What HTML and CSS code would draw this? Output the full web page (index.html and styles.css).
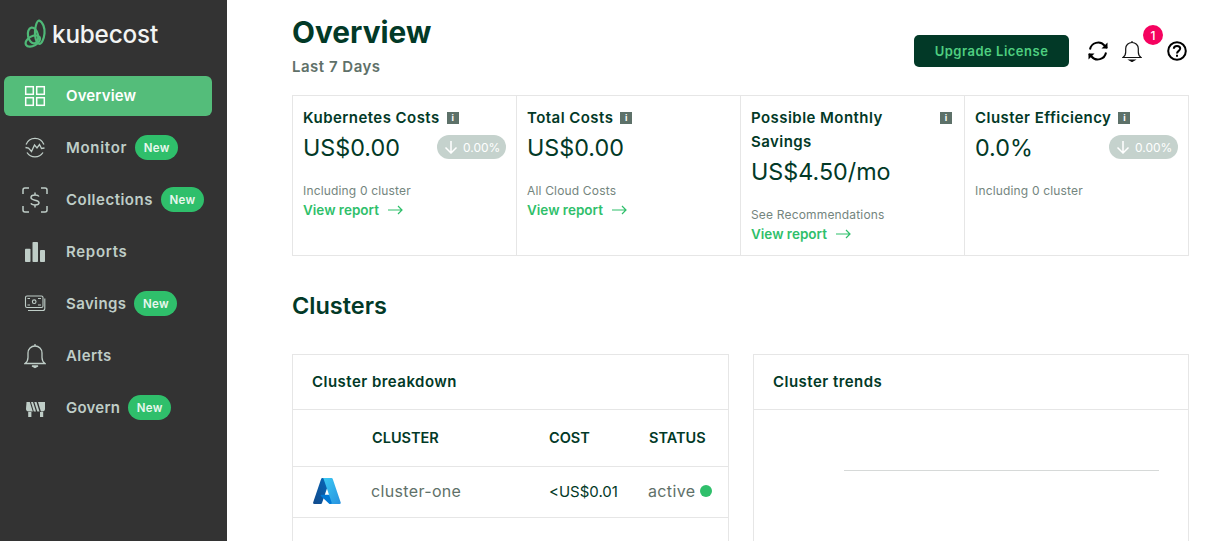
FILE: index.html
```html
<!DOCTYPE html>
<html lang="en">
<head>
<meta charset="utf-8">
<title>Kubecost Overview</title>
<link rel="stylesheet" href="styles.css">
</head>
<body>
<div class="app">
  <aside class="sidebar">
    <div class="logo">
      <svg class="logo-mark" width="24" height="30" viewBox="0 0 24 30" fill="none" stroke="#4fb877" stroke-width="2.200">
        <path d="M15 1.500C19 3 21 9 20.500 14.500 20 20 17.500 25 15.500 25 12 24 10.500 17 11 12 11.500 7 13 2 15 1.500z"/>
        <ellipse cx="9" cy="16.500" rx="5" ry="8" transform="rotate(-12 9 16.500)"/>
        <ellipse cx="8.800" cy="22" rx="7.800" ry="4.800" transform="rotate(-30 8.800 22)"/>
      </svg>
      <span class="logo-text">kubecost</span>
    </div>
    <nav class="nav">
      <a class="nav-item active">
        <span class="nav-icon"><svg width="22" height="22" viewBox="0 0 22 22" fill="none" stroke="currentColor" stroke-width="1.500"><rect x="1.700" y="1.700" width="7.600" height="7.600"/><rect x="12.700" y="1.700" width="7.600" height="7.600"/><rect x="1.700" y="12.700" width="7.600" height="7.600"/><rect x="12.700" y="12.700" width="7.600" height="7.600"/></svg></span>
        <span class="nav-label narrow">Overview</span>
      </a>
      <a class="nav-item">
        <span class="nav-icon"><svg width="22" height="22" viewBox="0 0 22 22" fill="none" stroke="currentColor" stroke-width="1.300"><path d="M2.100 7.500A9.500 9.500 0 0 1 19.900 7.500"/><path d="M3 15.500A9.500 9.500 0 0 0 19 15.500"/><path d="M1.500 10.500 4.500 11 7.500 14.500 10.500 8 13 11 15.500 7.500 17.500 11.500 20.500 11"/></svg></span>
        <span class="nav-label wider">Monitor</span><span class="badge">New</span>
      </a>
      <a class="nav-item">
        <span class="nav-icon nudge"><svg width="26" height="26" viewBox="0 0 26 26" fill="none" stroke="currentColor" stroke-width="1.500"><path d="M1 7V3a2 2 0 0 1 2-2h4M19 1h4a2 2 0 0 1 2 2v4M25 19v4a2 2 0 0 1-2 2h-4M7 25H3a2 2 0 0 1-2-2v-4"/><path d="M17 9.500C16.500 8.500 15 8 13 8 10.500 8 9 9 9 10.500 9 12.200 10.500 12.700 13 13.200S17 14.200 17 15.800 15.500 18 13 18C11 18 9.500 17.500 9 16.300M13 5.500V8M13 18v2.500"/></svg></span>
        <span class="nav-label wide-s">Collections</span><span class="badge">New</span>
      </a>
      <a class="nav-item">
        <span class="nav-icon"><svg width="22" height="22" viewBox="0 0 22 22" fill="currentColor"><rect x="1" y="7.700" width="5.500" height="13.300" rx=".8"/><rect x="8.500" y="1" width="5.500" height="20" rx=".8"/><rect x="16" y="9" width="5" height="12" rx=".8"/></svg></span>
        <span class="nav-label wider">Reports</span>
      </a>
      <a class="nav-item">
        <span class="nav-icon"><svg width="22" height="22" viewBox="0 0 22 22" fill="none" stroke="currentColor" stroke-width="1.100"><rect x="1.500" y="3" width="17.500" height="11.500" rx="1.500"/><path d="M3.500 5.500h2.500M14 5.500h3M3.500 12h2.500M14 12h3"/><circle cx="10.200" cy="8.700" r="1.800"/><path d="M20.800 5.500v10a2 2 0 0 1-2 2H4"/></svg></span>
        <span class="nav-label">Savings</span><span class="badge">New</span>
      </a>
      <a class="nav-item">
        <span class="nav-icon"><svg width="22" height="26" viewBox="0 0 22 26" fill="none" stroke="currentColor" stroke-width="1.300"><path d="M1 20.500h20c-2-1.500-3-3-3-6V10c0-4-3-7-7-7s-7 3-7 7v4.500c0 3-1 4.500-3 6z"/><path d="M11 3V1"/><path d="M8 23h6l-3 1.500z" fill="currentColor"/></svg></span>
        <span class="nav-label">Alerts</span>
      </a>
      <a class="nav-item">
        <span class="nav-icon"><svg width="22" height="22" viewBox="0 0 22 22" fill="currentColor"><path d="M2.500 5h3.300l3 9.500H4.500C3 14.500 2 13.500 2 12z"/><path d="M7 5h2l3 9.500H9.800z"/><path d="M10.300 5h2.200l3 9.500h-2.200z"/><path d="M14 5h7v7c0 1.500-1 2.500-2.500 2.500h-1.600z"/><rect x="4.200" y="15" width="3.200" height="5"/><rect x="16" y="15" width="3.200" height="5"/></svg></span>
        <span class="nav-label tight">Govern</span><span class="badge">New</span>
      </a>
    </nav>
  </aside>

  <main class="main">
    <header class="page-head">
      <div>
        <h1 class="page-title">Overview</h1>
        <div class="page-sub">Last 7 Days</div>
      </div>
      <div class="head-actions">
        <button class="upgrade">Upgrade License</button>
        <svg class="act-refresh" width="22" height="22" viewBox="0 0 22 22" fill="none" stroke="#000" stroke-width="2"><path d="M3 9.500A8.300 8.300 0 0 1 17.500 5.500L20 8"/><path d="M20.500 2.500V8.500H14.500" stroke-width="0" fill="#000"/><path d="M19 12.500A8.300 8.300 0 0 1 4.500 16.500L2 14"/><path d="M1.500 19.500V13.500H7.500" stroke-width="0" fill="#000"/></svg>
        <div class="bell-wrap">
          <svg width="20" height="22" viewBox="0 0 20 22" fill="none" stroke="#111" stroke-width="1.200"><path d="M1 17.500h18c-1.800-1.300-2.700-2.700-2.700-5.500V8.500C16.300 5 13.500 2.500 10 2.500S3.700 5 3.700 8.500V12c0 2.800-.9 4.200-2.700 5.500z"/><path d="M10 2.500V1"/><path d="M7.500 20h5l-2.500 1.500z" fill="#111"/></svg>
          <span class="bell-count">1</span>
        </div>
        <svg width="20" height="20" viewBox="0 0 20 20" fill="none" stroke="#000" stroke-width="2"><circle cx="10" cy="10" r="8.800"/><path d="M6.800 7.800C6.800 6 8.200 5 10 5s3.200 1 3.200 2.600c0 2.300-3.200 2.300-3.200 4.900"/><path d="M10 13.700v2" /></svg>
      </div>
    </header>

    <section class="stats">
      <div class="stat">
        <div class="stat-title"><span>Kubernetes Costs</span><i class="info">i</i></div>
        <div class="stat-row"><span class="stat-value">US$0.00</span><span class="pill"><svg width="14" height="14" viewBox="0 0 14 14" fill="none" stroke="#fff" stroke-width="1.500"><path d="M7 1v12M1.500 7.500 7 13l5.500-5.500"/></svg>0.00%</span></div>
        <div class="stat-note">Including 0 cluster</div>
        <a class="report">View report <svg width="15" height="10" viewBox="0 0 15 10" fill="none" stroke="#2fbf6b" stroke-width="1.200"><path d="M0 5h14M10 1l4 4-4 4"/></svg></a>
      </div>
      <div class="stat">
        <div class="stat-title"><span>Total Costs</span><i class="info">i</i></div>
        <div class="stat-row"><span class="stat-value">US$0.00</span></div>
        <div class="stat-note">All Cloud Costs</div>
        <a class="report">View report <svg width="15" height="10" viewBox="0 0 15 10" fill="none" stroke="#2fbf6b" stroke-width="1.200"><path d="M0 5h14M10 1l4 4-4 4"/></svg></a>
      </div>
      <div class="stat">
        <div class="stat-title spread"><span>Possible Monthly Savings</span><i class="info">i</i></div>
        <div class="stat-row"><span class="stat-value">US$4.50/mo</span></div>
        <div class="stat-note">See Recommendations</div>
        <a class="report">View report <svg width="15" height="10" viewBox="0 0 15 10" fill="none" stroke="#2fbf6b" stroke-width="1.200"><path d="M0 5h14M10 1l4 4-4 4"/></svg></a>
      </div>
      <div class="stat">
        <div class="stat-title"><span>Cluster Efficiency</span><i class="info">i</i></div>
        <div class="stat-row"><span class="stat-value">0.0%</span><span class="pill"><svg width="14" height="14" viewBox="0 0 14 14" fill="none" stroke="#fff" stroke-width="1.500"><path d="M7 1v12M1.500 7.500 7 13l5.500-5.500"/></svg>0.00%</span></div>
        <div class="stat-note">Including 0 cluster</div>
      </div>
    </section>

    <h2 class="section-title">Clusters</h2>

    <section class="panels">
      <div class="panel">
        <div class="panel-head">Cluster breakdown</div>
        <div class="row row-head">
          <span></span><span>CLUSTER</span><span>COST</span><span>STATUS</span>
        </div>
        <div class="row row-data">
          <span class="azure"><svg width="28" height="26" viewBox="4 6.500 88.500 83"><defs><linearGradient id="az1" x1="0" y1="1" x2="1" y2="0"><stop offset="0" stop-color="#114a8b"/><stop offset="1" stop-color="#0669bc"/></linearGradient><linearGradient id="az2" x1="0" y1="0" x2="1" y2="1"><stop offset="0" stop-color="#3ccbf4"/><stop offset="1" stop-color="#2892df"/></linearGradient></defs><path d="M33.340 6.540h26.040l-27.030 80.100a4.150 4.150 0 0 1-3.940 2.810H8.150a4.140 4.140 0 0 1-3.930-5.470L29.400 9.380a4.150 4.150 0 0 1 3.940-2.840z" fill="url(#az1)"/><path d="M71.170 60.260H29.880a1.910 1.910 0 0 0-1.300 3.310l26.530 24.760a4.170 4.170 0 0 0 2.850 1.130h23.380z" fill="#0078d4"/><path d="M66.600 9.360a4.140 4.140 0 0 0-3.930-2.820H33.650a4.150 4.150 0 0 1 3.930 2.820l25.180 74.620a4.150 4.150 0 0 1-3.930 5.480h29.020a4.150 4.150 0 0 0 3.930-5.480z" fill="url(#az2)"/></svg></span>
          <span class="muted wide">cluster-one</span>
          <span class="cost">&lt;US$0.01</span>
          <span class="muted wide status">active<i class="dot"></i></span>
        </div>
      </div>
      <div class="panel">
        <div class="panel-head">Cluster trends</div>
        <div class="chart"><div class="chart-line"></div></div>
      </div>
    </section>
  </main>
</div>
</body>
</html>
```
FILE: styles.css
```css
* { box-sizing: border-box; }
html, body { margin: 0; height: 100%; overflow: hidden; }
body { font-family: "Inter", "Liberation Sans", sans-serif; color: #023927; background: #fff; }
.app { display: flex; height: 541px; overflow: hidden; }

.sidebar { width: 227px; flex: none; background: #333; padding-top: 17px; }
.logo { display: flex; align-items: center; height: 34px; padding-left: 24px; gap: 4px; }
.logo-text { color: #f2f4f3; font-size: 24.300px; font-weight: 500; letter-spacing: -0.2px; line-height: 34px; }
.nav { display: flex; flex-direction: column; gap: 12px; margin-top: 25px; }
.nav-item { display: flex; align-items: center; height: 40px; width: 208px; margin-left: 4px; border-radius: 6px; color: #bfcdc7; font-size: 15px; font-weight: 600; letter-spacing: 0.4px; }
.nav-item.active { background: #54bd7a; color: #fff; }
.nav-label { margin-bottom: 2px; }
.nav-label.narrow { letter-spacing: 0.15px; }
.nav-label.wider { letter-spacing: 0.7px; }
.nav-label.wide-s { letter-spacing: 0.5px; }
.nav-label.tight { letter-spacing: 0.23px; }
.nav-icon { width: 62px; flex: none; padding-left: 20px; display: flex; align-items: center; }
.nav-icon.nudge { padding-left: 18px; }
.nav-icon svg { display: block; flex: none; }
.badge { margin-left: 8px; height: 25px; width: 43px; border-radius: 13px; background: #2fbf6b; color: #e8f7ee; font-size: 11.500px; font-weight: 600; display: flex; align-items: center; justify-content: center; letter-spacing: 0.3px; margin-bottom: 1px; }

.main { flex: 1; min-width: 0; padding: 0 36px 0 65px; }
.page-head { display: flex; justify-content: space-between; height: 95px; }
.page-title { margin: 12px 0 0; font-size: 29.800px; line-height: 40px; font-weight: 700; color: #023927; }
.page-sub { margin-top: 5px; font-size: 15px; line-height: 20px; font-weight: 600; letter-spacing: 0.5px; color: #5f7169; }
.head-actions { display: flex; align-items: center; height: 102px; align-self: flex-start; padding-right: 2px; }
.upgrade { width: 155px; height: 32px; border: 0; border-radius: 5px; background: #023927; color: #4fcf80; font: 600 13px "Inter", sans-serif; letter-spacing: 0.5px; margin-right: 18px; }
.act-refresh { margin-right: 13px; }
.bell-wrap { position: relative; width: 20px; height: 22px; margin-right: 25px; }
.bell-count { position: absolute; left: 21px; top: -15px; width: 20px; height: 20px; border-radius: 50%; background: #f5025f; color: #fff; font-size: 12px; font-weight: 500; display: flex; align-items: center; justify-content: center; }

.stats { display: grid; grid-template-columns: 223px 224px 224px 224px; width: 897px; height: 161px; border: 1px solid #e6e6e6; }
.stat { padding: 10px 10px 0; border-left: 1px solid #e6e6e6; }
.stat:first-child { border-left: 0; }
.stat-title { display: flex; align-items: center; gap: 7px; font-size: 15px; line-height: 24px; font-weight: 600; letter-spacing: 0.45px; }
.stat-title.spread { justify-content: space-between; align-items: flex-start; }
.stat-title.spread .info { margin: 6px 2px 0 0; }
.info { flex: none; width: 12px; height: 12px; background: #5d7169; color: #fff; font: 700 9px/12px "Inter", sans-serif; letter-spacing: 0; text-align: center; }
.stat-row { display: flex; justify-content: space-between; align-items: center; height: 34px; }
.stat-value { font-size: 23.300px; font-weight: 400; color: #023927; }
.pill { display: flex; align-items: center; gap: 5px; width: 69px; height: 24px; padding-left: 7px; border-radius: 12px; background: #c5d2cd; color: #fff; font-size: 12px; }
.stat-note { margin-top: 19px; font-size: 12px; line-height: 16px; letter-spacing: 0.17px; color: #74857e; }
.report { display: flex; align-items: center; gap: 9px; margin-top: 1px; font-size: 13.500px; line-height: 20px; font-weight: 600; color: #2fbf6b; }

.section-title { margin: 34px 0 0; font-size: 23.500px; line-height: 32px; font-weight: 600; color: #023927; }

.panels { display: grid; grid-template-columns: 437px 436px; gap: 24px; margin-top: 32px; }
.panel { height: 300px; border: 1px solid #e6e6e6; }
.panel-head { height: 55px; padding: 0 0 2px 19px; display: flex; align-items: center; font-size: 15px; font-weight: 600; letter-spacing: 0.47px; border-bottom: 1px solid #e6e6e6; }
.row { display: grid; grid-template-columns: 78px 178px 99px 1fr; align-items: center; border-bottom: 1px solid #e6e6e6; }
.row-head { height: 57px; padding-bottom: 2px; font-size: 14.500px; font-weight: 600; }
.row-head span:nth-child(2), .row-head span:nth-child(4) { margin-left: 1px; }
.row-data { height: 51px; padding-bottom: 2px; font-size: 15px; }
.azure { padding-left: 20px; display: flex; }
.muted { color: #5f7169; }
.wide { font-size: 16px; letter-spacing: 0.35px; }
.cost { color: #023927; }
.status { display: flex; align-items: center; gap: 5px; }
.dot { width: 12px; height: 12px; border-radius: 50%; background: #2fbf6b; }
.chart { padding: 60px 29px 0 90px; }
.chart-line { height: 1px; background: #d6d9d8; }
```
